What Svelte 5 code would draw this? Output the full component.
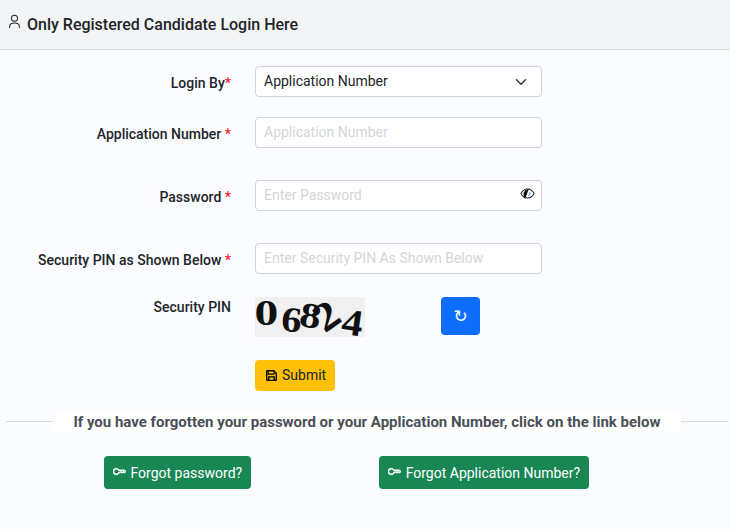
<script lang="ts">
	// Форма входа кандидата
	const captcha = [
		{ ch: '0', cls: 'c0' },
		{ ch: '6', cls: 'c1' },
		{ ch: '8', cls: 'c2' },
		{ ch: '2', cls: 'c3' },
		{ ch: '4', cls: 'c4' }
	];
	const keyPath =
		'M0 8a4 4 0 0 1 7.465-2H14a.5.5 0 0 1 .354.146l1.5 1.5a.5.5 0 0 1 0 .708l-1.5 1.5a.5.5 0 0 1-.708 0L13 9.207l-.646.647a.5.5 0 0 1-.708 0L11 9.207l-.646.647a.5.5 0 0 1-.708 0L9 9.207l-.646.647A.5.5 0 0 1 8 10h-.535A4 4 0 0 1 0 8zm4-3a3 3 0 1 0 2.712 4.285A.5.5 0 0 1 7.163 9h.63l.853-.854a.5.5 0 0 1 .708 0l.646.647.646-.647a.5.5 0 0 1 .708 0l.646.647.646-.647a.5.5 0 0 1 .708 0l.646.647.793-.793-1-1h-6.63a.5.5 0 0 1-.451-.285A3 3 0 0 0 4 5z';
</script>

<div class="page">
	<header class="card-header">
		<svg class="person" viewBox="0 0 12 16" fill="none" stroke="currentColor" stroke-width="1.100">
			<circle cx="6" cy="4.500" r="3.300" />
			<path d="M.7 15v-1.300c0-2.600 2.300-4 5.300-4s5.300 1.400 5.300 4V15" />
		</svg>
		<h1>Only Registered Candidate Login Here</h1>
	</header>

	<form class="login-form">
		<div class="row gap-20">
			<span class="label">Login By<b>*</b></span>
			<div class="control select">
				<span>Application Number</span>
				<svg class="chevron" viewBox="0 0 16 16" fill="none" stroke="#343a40" stroke-width="2" stroke-linecap="round" stroke-linejoin="round">
					<path d="m2 5 6 6 6-6" />
				</svg>
			</div>
		</div>

		<div class="row gap-32">
			<span class="label">Application Number <b>*</b></span>
			<div class="control placeholder">Application Number</div>
		</div>

		<div class="row gap-32">
			<span class="label">Password <b>*</b></span>
			<div class="control placeholder">
				<span>Enter Password</span>
				<svg class="eye" viewBox="0 0 16 12">
					<path d="M.8 6S3.500 1 8 1s7.200 5 7.200 5-2.700 5-7.200 5S.8 6 .8 6Z" fill="none" stroke="#222" stroke-width="1.100" />
					<path d="M9.800 .4 5.600 11.400l-1.200-.5L3.500 6 5.500 2.500 8.600 1.300Z" fill="#111" />
					<path d="M10.500 4.500a3 3 0 0 1-1.500 4" fill="none" stroke="#2a6fc9" stroke-width="1" />
				</svg>
			</div>
		</div>

		<div class="row gap-23">
			<span class="label">Security PIN as Shown Below <b>*</b></span>
			<div class="control placeholder">Enter Security PIN As Shown Below</div>
		</div>

		<div class="row gap-23 captcha-row">
			<span class="label">Security PIN</span>
			<div class="captcha-wrap">
				<div class="captcha">
					{#each captcha as item (item.cls)}
						<span class={item.cls}>{item.ch}</span>
					{/each}
				</div>
				<button type="button" class="refresh">↻</button>
			</div>
		</div>

		<div class="row">
			<span></span>
			<div>
				<button type="button" class="submit">
					<svg class="save" viewBox="0 0 16 16" fill="currentColor">
						<path d="M2 0a2 2 0 0 0-2 2v12a2 2 0 0 0 2 2h12a2 2 0 0 0 2-2V4.500L11.500 0H2Zm0 2h9v3H4V2H2Zm0 0v12h1V9h10v5h1V5.300L12.500 3.500V7h-10V2Zm3 9h6v3H5v-3Z" fill-rule="evenodd" />
					</svg>
					<span class="submit-text">Submit</span>
				</button>
			</div>
		</div>
	</form>

	<div class="divider">
		<span>If you have forgotten your password or your Application Number, click on the link below</span>
	</div>

	<div class="links">
		<button type="button" class="forgot first">
			<svg class="key" viewBox="0 0 16 16" fill="currentColor" stroke="currentColor" stroke-width="1"><path d={keyPath} /></svg>
			Forgot password?
		</button>
		<button type="button" class="forgot">
			<svg class="key" viewBox="0 0 16 16" fill="currentColor" stroke="currentColor" stroke-width="1"><path d={keyPath} /></svg>
			Forgot Application Number?
		</button>
	</div>
</div>

<style>
	:global(body) {
		margin: 0;
		background: #fbfcff;
		font-family: Roboto, sans-serif;
		color: #212529;
		overflow: hidden;
	}

	.page {
		width: 730px;
		height: 529px;
		overflow: hidden;
	}

	/* --- HEADER --- */
	.card-header {
		display: flex;
		align-items: center;
		gap: 7px;
		height: 49px;
		padding-left: 9px;
		background: #f3f4f6;
		border-bottom: 1px solid #d6d8db;
	}

	.person {
		width: 11px;
		height: 15px;
		margin-top: -6px;
	}

	h1 {
		margin: 0;
		font-size: 16px;
		font-weight: 500;
		line-height: 24px;
	}

	/* --- FORM --- */
	.login-form {
		padding-top: 16px;
	}

	.row {
		display: grid;
		grid-template-columns: 231px 287px;
		column-gap: 24px;
	}

	.gap-20 {
		margin-bottom: 20px;
	}

	.gap-32 {
		margin-bottom: 32px;
	}

	.gap-23 {
		margin-bottom: 23px;
	}

	.label {
		padding-top: 7px;
		font-size: 14px;
		font-weight: 500;
		line-height: 21px;
		text-align: right;
	}

	.label b {
		color: #f5222d;
		font-weight: 500;
	}

	.control {
		box-sizing: border-box;
		display: flex;
		align-items: center;
		justify-content: space-between;
		height: 31px;
		padding: 0 6px 0 8px;
		background: #fff;
		border: 1px solid #ced4da;
		border-radius: 4px;
		font-size: 14px;
		line-height: 21px;
	}

	.placeholder {
		color: #d3d5d8;
	}

	.chevron {
		width: 12px;
		height: 12px;
		margin-right: 8px;
	}

	.eye {
		width: 15px;
		height: 11px;
		margin-top: -4px;
	}

	/* --- CAPTCHA --- */
	.captcha-row .label {
		padding-top: 0;
	}

	.captcha-wrap {
		display: flex;
		align-items: flex-start;
		gap: 76px;
	}

	.captcha {
		display: flex;
		width: 110px;
		height: 40px;
		background: #f0f0f0;
		color: #111;
		font-family: 'Liberation Serif', serif;
		font-weight: 700;
		font-size: 34px;
		line-height: 40px;
	}

	.captcha span {
		display: block;
		width: 17px;
	}

	.c0 {
		margin-left: 3px;
		transform: translateY(-4px) scale(1.4, 1.05);
	}

	.c1 {
		margin-left: 8px;
		transform: translateY(3px) rotate(6deg) scale(1.2, 1.05);
	}

	.c2 {
		margin-left: 2px;
		transform: translateY(-1px) rotate(10deg) scale(1.25, 1.05);
	}

	.c3 {
		margin-left: -1.5px;
		transform: translateY(-1px) rotate(-35deg) scale(1.35, 1.2);
	}

	.c4 {
		margin-left: 9px;
		transform: translateY(6px) rotate(8deg) scale(1.25, 1.1);
	}

	.refresh {
		box-sizing: border-box;
		width: 39px;
		height: 38px;
		padding: 0;
		background: #0d6efd;
		border: 0;
		border-radius: 4px;
		color: #fff;
		font-family: 'DejaVu Sans', sans-serif;
		font-size: 17px;
		line-height: 38px;
	}

	.submit {
		display: inline-flex;
		align-items: center;
		gap: 5px;
		box-sizing: border-box;
		height: 31px;
		width: 80px;
		padding: 0 0 0 11px;
		background: #ffc107;
		border: 0;
		border-radius: 4px;
		color: #212529;
		font-family: inherit;
		font-size: 14px;
	}

	.submit-text {
		margin-top: -2px;
	}

	.save {
		width: 11px;
		height: 11px;
		color: #000;
	}

	/* --- DIVIDER --- */
	.divider {
		display: flex;
		justify-content: center;
		align-items: center;
		height: 20px;
		margin: 21px 2px 0 6px;
		background: linear-gradient(#d9dbde, #d9dbde) 0 9px / 100% 1px no-repeat;
	}

	.divider span {
		padding: 0 20px;
		background: #fff;
		color: #495057;
		font-size: 15px;
		font-weight: 700;
		line-height: 20px;
		white-space: nowrap;
	}

	/* --- LINKS --- */
	.links {
		display: flex;
		padding: 24px 0 0 104px;
		gap: 128px;
	}

	.forgot {
		display: inline-flex;
		align-items: center;
		gap: 4.5px;
		box-sizing: border-box;
		height: 33px;
		padding: 0 9px;
		background: #198754;
		border: 0;
		border-radius: 4px;
		color: #fff;
		font-family: inherit;
		font-size: 14px;
		white-space: nowrap;
	}

	.key {
		width: 13px;
		height: 13px;
		margin-top: -3px;
	}
</style>
